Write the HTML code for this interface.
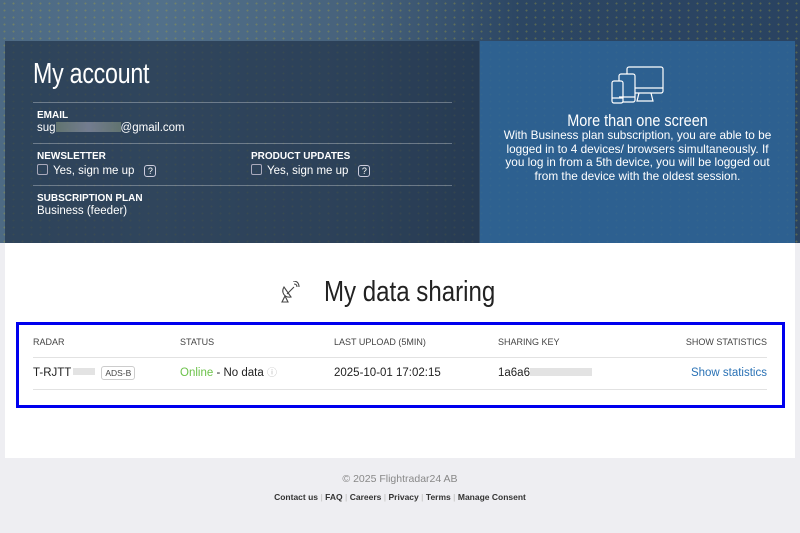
<!DOCTYPE html>
<html><head><meta charset="utf-8"><style>
*{margin:0;padding:0;box-sizing:border-box}
body{width:800px;height:533px;overflow:hidden;background:#eeeef2;font-family:"Liberation Sans",sans-serif;position:relative}
.map{position:absolute;left:0;top:0;width:800px;height:243px;background:linear-gradient(90deg,#4d6a84 0%,#52708a 20%,#46617b 45%,#2c4663 65%,#2a4361 100%)}
.dots{position:absolute;inset:0;background-image:radial-gradient(#a8a63a 1px,transparent 1.3px);background-size:9px 7px;opacity:.35}
.left{position:absolute;left:5px;top:41px;width:474px;height:202px;background:rgba(35,52,75,.72);color:#fff}
.right{position:absolute;left:480px;top:41px;width:315px;height:202px;background:rgba(45,100,150,.88);color:#fff;text-align:center}
h1{position:absolute;left:28px;top:17px;font-weight:normal;font-size:29px;transform:scaleX(.8);transform-origin:left;letter-spacing:-.3px}
.hr{position:absolute;left:28px;width:419px;height:1px;background:rgba(255,255,255,.3)}
.lbl{position:absolute;font-size:10px;font-weight:bold}
.val{position:absolute;font-size:11.5px}
.cb{display:inline-block;width:11px;height:11px;border:1px solid #aab;border-radius:2px;vertical-align:-1px;margin-right:5px}
.q{display:inline-block;width:12px;height:12px;border:1px solid #ccd;border-radius:3px;font-size:9px;text-align:center;line-height:10px;margin-left:10px}
.blur{display:inline-block;background:linear-gradient(90deg,#8a9a80,#aab 50%,#8a9a80);opacity:.55;height:10px;vertical-align:-1px}
.white{position:absolute;left:5px;top:243px;width:790px;height:215px;background:#fff}
.box{position:absolute;left:16px;top:322px;width:769px;height:86px;border:3px solid #0000ee}
.th{position:absolute;top:337px;color:#444;font-size:9px}
.td{position:absolute;top:366px;color:#222;font-size:11.5px;line-height:14px;height:14px;white-space:nowrap}
.line{position:absolute;left:33px;width:734px;height:1px;background:#e2e2e2}
.foot{position:absolute;width:800px;text-align:center;left:0}
</style></head><body>
<div class="map"><div class="dots"></div></div>
<div class="left">
<h1>My account</h1>
<div class="hr" style="top:61px"></div>
<div class="lbl" style="left:32px;top:69px">EMAIL</div>
<div class="val" style="left:32px;top:81px">sug<span class="blur" style="width:65px"></span>@gmail.com</div>
<div class="hr" style="top:102px"></div>
<div class="lbl" style="left:32px;top:110px">NEWSLETTER</div>
<div class="val" style="left:32px;top:123px"><span class="cb"></span>Yes, sign me up<span class="q">?</span></div>
<div class="lbl" style="left:246px;top:110px">PRODUCT UPDATES</div>
<div class="val" style="left:246px;top:123px"><span class="cb"></span>Yes, sign me up<span class="q">?</span></div>
<div class="hr" style="top:144px"></div>
<div class="lbl" style="left:32px;top:152px">SUBSCRIPTION PLAN</div>
<div class="val" style="left:32px;top:164px">Business (feeder)</div>
</div>
<div class="right">
<svg style="position:absolute;left:131px;top:25px" width="54" height="38" viewBox="0 0 54 38" fill="none" stroke="#fff" stroke-width="1.2"><rect x="16" y="1" width="36" height="26" rx="2"/><path d="M16 22h36M28 27l-2 8h16l-2-8"/><rect x="8" y="8" width="16" height="28" rx="2" fill="#2d6496"/><rect x="1" y="15" width="11" height="22" rx="2" fill="#2d6496"/><path d="M1 32h11M8 31h16"/></svg>
<div style="position:absolute;left:0;width:315px;top:70px;font-size:17px;transform:scaleX(.85)">More than one screen</div>
<div style="position:absolute;left:22px;width:271px;top:88px;font-size:11.8px;line-height:13.5px">With Business plan subscription, you are able to be logged in to 4 devices/ browsers simultaneously. If you log in from a 5th device, you will be logged out from the device with the oldest session.</div>
</div>
<div class="white"></div>
<svg style="position:absolute;left:280px;top:281px" width="20" height="22" viewBox="0 0 20 22" fill="none" stroke="#444" stroke-width="1.1"><path d="M4 6c-3 5 0 11 7 10z"/><path d="M7 13l5-5M12 8l2-2M14 3c2 0 3 1 3 3M13 0c4 0 6 2 6 6M5 15l-3 6h6z"/></svg>
<div style="position:absolute;left:324px;top:276px;font-size:29px;color:#222;transform:scaleX(.83);transform-origin:left">My data sharing</div>
<div class="box"></div>
<div class="th" style="left:33px">RADAR</div>
<div class="th" style="left:180px">STATUS</div>
<div class="th" style="left:334px">LAST UPLOAD (5MIN)</div>
<div class="th" style="left:498px">SHARING KEY</div>
<div class="th" style="right:33px">SHOW STATISTICS</div>
<div class="line" style="top:357px"></div>
<div class="td" style="left:33px">T-RJTT<span class="blur" style="width:22px;height:7px;margin:0 6px 0 2px;background:#ccc;vertical-align:1px"></span><span style="font-size:8.5px;border:1px solid #ccc;border-radius:3px;padding:1px 3px;color:#444">ADS-B</span></div>
<div class="td" style="left:180px"><span style="color:#6cc24a">Online</span> - No data <span style="color:#bbb;font-size:10px;line-height:10px">ⓘ</span></div>
<div class="td" style="left:334px">2025-10-01 17:02:15</div>
<div class="td" style="left:498px">1a6a6<span class="blur" style="width:62px;height:8px;background:#ccc;vertical-align:0"></span></div>
<div class="td" style="right:33px;color:#2a72b5">Show statistics</div>
<div class="line" style="top:389px"></div>
<div class="foot" style="top:473px;font-size:10.5px;color:#888">© 2025 Flightradar24 AB</div>
<div class="foot" style="top:492px;font-size:8.5px;color:#333;font-weight:bold">Contact us <span style="color:#ccc">|</span> FAQ <span style="color:#ccc">|</span> Careers <span style="color:#ccc">|</span> Privacy <span style="color:#ccc">|</span> Terms <span style="color:#ccc">|</span> Manage Consent</div>
</body></html>
